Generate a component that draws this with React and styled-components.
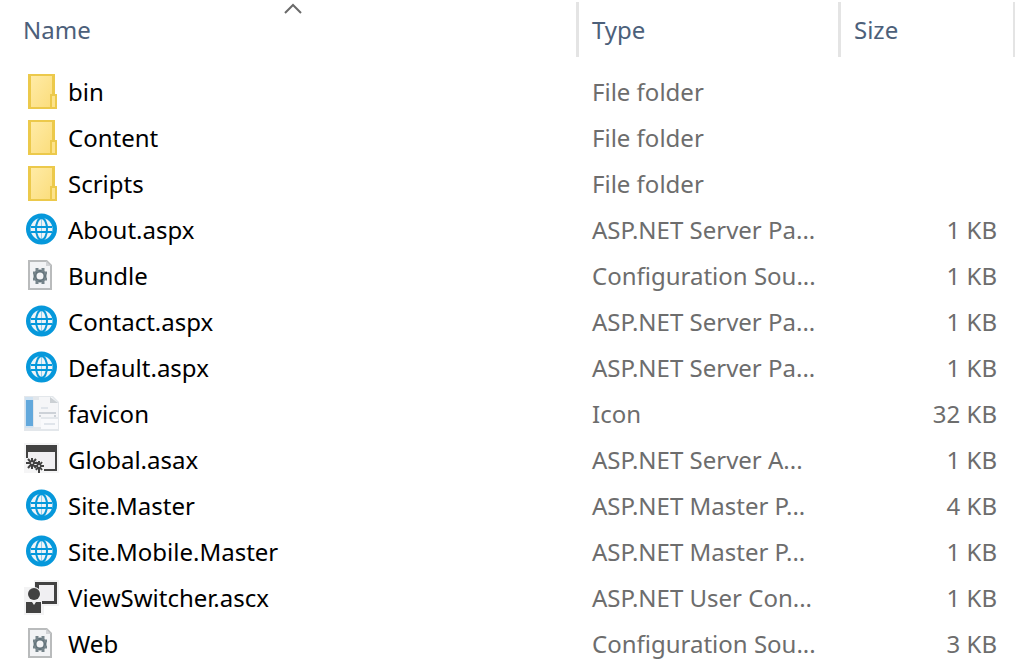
import React from "react";
import styled, { createGlobalStyle } from "styled-components";

const GlobalStyle = createGlobalStyle`
  * { box-sizing: border-box; }
  body {
    margin: 0;
    background: #fff;
    color: #000;
    font-family: "Noto Sans", "Segoe UI", sans-serif;
    font-size: 24px;
    line-height: 32px;
  }
`;

const Page = styled.main`
  padding: 2px 9px 0 0;
`;

const FileTable = styled.table`
  width: 100%;
  table-layout: fixed;
  border-collapse: separate;
  border-spacing: 0;
`;

const HeaderCell = styled.th`
  position: relative;
  width: ${(p) => p.$width || "auto"};
  height: 55px;
  padding: 0 0 0 ${(p) => p.$indent || "13px"};
  border-right: ${(p) => p.$rule || "3px"} solid #e4e4e4;
  text-align: left;
  vertical-align: middle;
`;

const SortButton = styled.button`
  display: block;
  width: 100%;
  padding: 0;
  border: 0;
  background: none;
  color: #4c607a;
  font: inherit;
  font-weight: 400;
  text-align: left;
`;

const SortArrow = styled.svg`
  position: absolute;
  top: 0;
  left: 50%;
  width: 18px;
  height: 12px;
  margin-left: -4px;
`;

const FileRows = styled.tbody`
  &::before {
    content: "";
    display: block;
    height: 12px;
  }
`;

const FileRow = styled.tr`
  height: 46px;
`;

const Cell = styled.td`
  padding: 0 0 0 13px;
  color: #6d6d6d;
  white-space: nowrap;
  vertical-align: middle;
`;

const NameCell = styled(Cell)`
  padding-left: 24px;
  color: #000;
`;

const SizeCell = styled(Cell)`
  padding: 0 18px 0 0;
  text-align: right;
`;

const FileName = styled.div`
  display: flex;
  align-items: center;
  gap: 8px;
`;

const Icon = styled.svg`
  flex: none;
  width: 36px;
  height: 36px;
`;

const FolderIcon = () => (
  <Icon viewBox="0 0 36 36" aria-hidden="true">
    <defs>
      <linearGradient id="folder" x1="0" y1="0" x2="1" y2="1">
        <stop offset="0" stopColor="#ffeba6" />
        <stop offset="1" stopColor="#fbdd7c" />
      </linearGradient>
    </defs>
    <path d="M4 0H31V20H33V35H4Z" fill="#ecc94b" />
    <path d="M7 2H28V20H26V33H7Z" fill="url(#folder)" />
    <path d="M28 22H31V33H28Z" fill="#fde38b" />
  </Icon>
);

const GlobeIcon = () => (
  <Icon viewBox="0 0 36 36" aria-hidden="true">
    <circle cx="17.5" cy="17" r="15.5" fill="#0698db" />
    <circle cx="17.5" cy="17" r="11" fill="#eef3f7" />
    <g fill="none" stroke="#0698db" strokeWidth="2">
      <path d="M7 15H28M7 20H28" />
      <path d="M17.5 6V28" strokeWidth="1" opacity="0.4" />
      <ellipse cx="17.5" cy="17" rx="5.5" ry="11" />
    </g>
  </Icon>
);

const ConfigIcon = () => (
  <Icon viewBox="0 0 36 36" aria-hidden="true">
    <path d="M4 2H23L28 7V32H4Z" fill="#b9bbbc" />
    <path d="M6 4H22V8H26V30H6Z" fill="#f2f3f5" />
    <path d="M22 3L27 8H22Z" fill="#d0d2d5" />
    <circle cx="16" cy="18" r="5" fill="none" stroke="#64747c" strokeWidth="3" />
    <path
      d="M13 10V14M19 10V14M13 22V26M19 22V26M9 15H12M9 21H12M20 15H23M20 21H23"
      stroke="#75838a"
      strokeWidth="3"
    />
  </Icon>
);

const FaviconIcon = () => (
  <Icon viewBox="0 0 36 36" aria-hidden="true">
    <path d="M0 0H29L35 6V35H0Z" fill="#e3e7eb" />
    <path d="M1 1H9V32H1Z" fill="#cfe2f2" />
    <path d="M2 4H9V30H2Z" fill="#62a8dc" />
    <path d="M10 4H15V1H28L34 7V21H17V31H10Z" fill="#f5f6f8" />
    <path d="M26 1L34 7H26Z" fill="#cbd0d4" />
    <path d="M17 23H34V33H17Z" fill="#f9fafc" />
    <path d="M15 17H32M15 20H17M30 20H32" stroke="#cdd2d8" strokeWidth="2" />
    <path d="M17 12H24M20 28H31" stroke="#e0e5eb" strokeWidth="2" />
  </Icon>
);

const GlobalIcon = () => (
  <Icon viewBox="0 0 36 36" aria-hidden="true">
    <path d="M0 1H35V31H0Z" fill="#f5f5f6" />
    <path d="M2 3H33V29H20V27H31V10H4V16H2Z" fill="#424242" />
    <path d="M4 10H31V27H20V19H4Z" fill="#f0eff2" />
    <g stroke="#424242" strokeWidth="2" fill="none">
      <path d="M8 16V27M2 21H14M4 17L12 26M12 17L4 26" />
      <path d="M15 19V31M10 24H20M12 20L18 28M18 20L12 28" />
    </g>
    <circle cx="8" cy="21" r="1" fill="#f0eff2" />
    <circle cx="15" cy="24" r="1" fill="#f0eff2" />
  </Icon>
);

const UserControlIcon = () => (
  <Icon viewBox="0 0 36 36" aria-hidden="true">
    <path d="M10 0H35V26H20V35H0V7H10Z" fill="#f3f3f4" />
    <path d="M11 2H33V24H18V21H30V5H15V9H11Z" fill="#424242" />
    <path d="M15 5H30V21H15Z" fill="#f0eff2" />
    <circle cx="10" cy="14" r="7" fill="#f3f3f4" />
    <circle cx="10" cy="14" r="6" fill="#424242" />
    <path d="M2 22H8L10 25L12 22H17V33H2Z" fill="#424242" />
  </Icon>
);

const files = [
  { name: "bin", type: "File folder", size: "", icon: FolderIcon },
  { name: "Content", type: "File folder", size: "", icon: FolderIcon },
  { name: "Scripts", type: "File folder", size: "", icon: FolderIcon },
  { name: "About.aspx", type: "ASP.NET Server Pa...", size: "1 KB", icon: GlobeIcon },
  { name: "Bundle", type: "Configuration Sou...", size: "1 KB", icon: ConfigIcon },
  { name: "Contact.aspx", type: "ASP.NET Server Pa...", size: "1 KB", icon: GlobeIcon },
  { name: "Default.aspx", type: "ASP.NET Server Pa...", size: "1 KB", icon: GlobeIcon },
  { name: "favicon", type: "Icon", size: "32 KB", icon: FaviconIcon },
  { name: "Global.asax", type: "ASP.NET Server A...", size: "1 KB", icon: GlobalIcon },
  { name: "Site.Master", type: "ASP.NET Master P...", size: "4 KB", icon: GlobeIcon },
  { name: "Site.Mobile.Master", type: "ASP.NET Master P...", size: "1 KB", icon: GlobeIcon },
  { name: "ViewSwitcher.ascx", type: "ASP.NET User Con...", size: "1 KB", icon: UserControlIcon },
  { name: "Web", type: "Configuration Sou...", size: "3 KB", icon: ConfigIcon },
];

export default function App() {
  return (
    <Page>
      <GlobalStyle />
      <FileTable>
        <thead>
          <tr>
            <HeaderCell scope="col" aria-sort="ascending" $indent="23px">
              <SortButton type="button">Name</SortButton>
              <SortArrow viewBox="0 0 18 12" aria-hidden="true">
                <path d="M1 11L9 3L17 11" fill="none" stroke="#6a6a6a" strokeWidth="2" />
              </SortArrow>
            </HeaderCell>
            <HeaderCell scope="col" $width="262px">
              <SortButton type="button">Type</SortButton>
            </HeaderCell>
            <HeaderCell scope="col" $width="174px" $rule="2px">
              <SortButton type="button">Size</SortButton>
            </HeaderCell>
          </tr>
        </thead>
        <FileRows>
          {files.map(({ name, type, size, icon: FileIcon }) => (
            <FileRow key={name}>
              <NameCell>
                <FileName>
                  <FileIcon />
                  <span>{name}</span>
                </FileName>
              </NameCell>
              <Cell>{type}</Cell>
              <SizeCell>{size}</SizeCell>
            </FileRow>
          ))}
        </FileRows>
      </FileTable>
    </Page>
  );
}
